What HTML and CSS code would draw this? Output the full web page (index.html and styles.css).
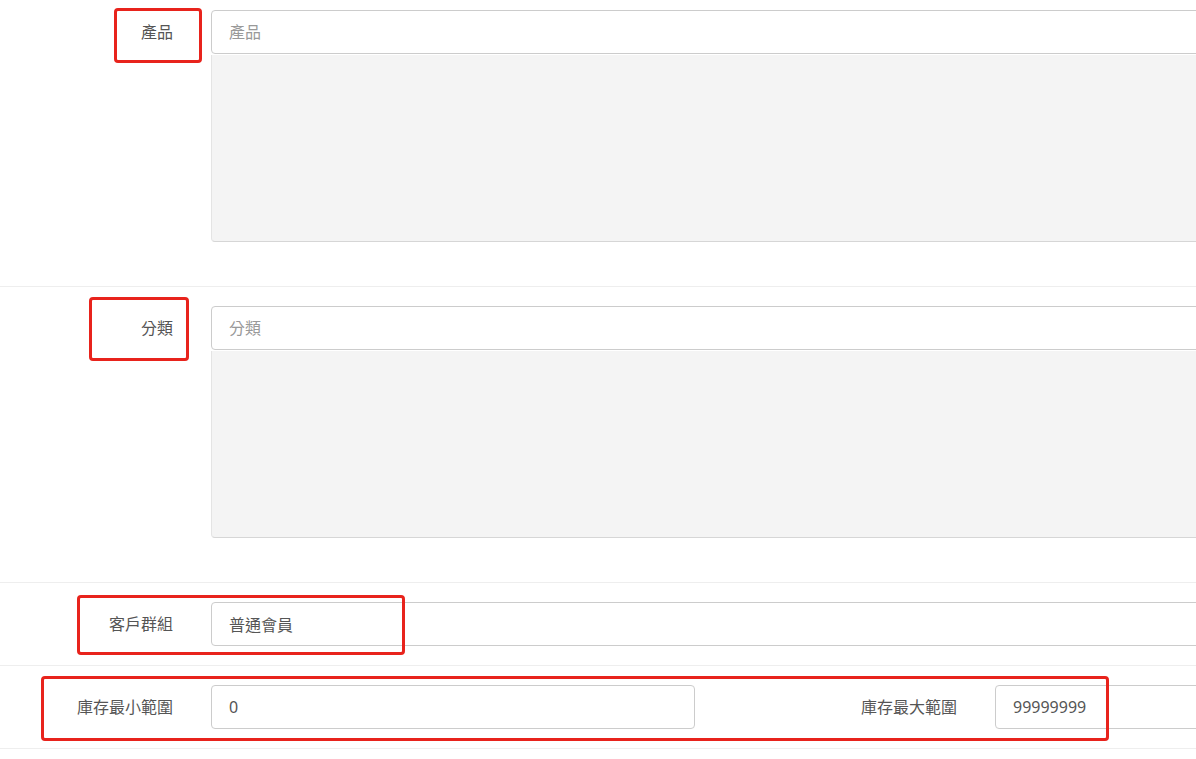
FILE: index.html
```html
<!DOCTYPE html>
<html>
<head>
  <title>商品篩選</title>
  <link rel="stylesheet" href="styles.css">
</head>
<body>

<div class="page">
  <form class="filter-form">
    <div class="form-row first">
      <label class="row-label" for="product">產品</label>
      <div class="row-field">
        <input type="text" id="product" class="text-input" placeholder="產品">
        <div class="pick-list"></div>
      </div>
    </div>

    <div class="form-row">
      <label class="row-label" for="category">分類</label>
      <div class="row-field">
        <input type="text" id="category" class="text-input" placeholder="分類">
        <div class="pick-list"></div>
      </div>
    </div>

    <div class="form-row short">
      <label class="row-label" for="group">客戶群組</label>
      <div class="row-field">
        <input type="text" id="group" class="text-input" value="普通會員">
      </div>
    </div>

    <div class="form-row short split">
      <label class="row-label" for="stockMin">庫存最小範圍</label>
      <input type="text" id="stockMin" class="text-input" value="0">
      <label class="row-label" for="stockMax">庫存最大範圍</label>
      <input type="text" id="stockMax" class="text-input" value="99999999">
    </div>
  </form>

  <!-- highlight marks -->
  <div class="mark mark-product"></div>
  <div class="mark mark-category"></div>
  <div class="mark mark-group"></div>
  <div class="mark mark-stock"></div>
</div>

</body>
</html>
```

FILE: styles.css
```css
html, body {
  margin: 0;
  padding: 0;
  background: #fff;
  overflow: hidden;
}
body {
  font-family: "Noto Sans", "Noto Sans CJK TC", sans-serif;
  font-size: 16px;
  color: #555;
}
.page {
  position: relative;
  width: 1480px;
}
.form-row {
  display: grid;
  grid-template-columns: 211px 1fr;
  padding: 19px 0 44px;
  border-bottom: 1px solid #eee;
}
.form-row.first {
  padding-top: 10px;
}
.form-row.short {
  padding-bottom: 19px;
}
.form-row.split {
  grid-template-columns: 211px 484px 300px 1fr;
}
.row-label {
  height: 44px;
  line-height: 44px;
  text-align: right;
  padding-right: 38px;
  white-space: nowrap;
}
.text-input {
  display: block;
  box-sizing: border-box;
  width: 100%;
  height: 44px;
  margin: 0;
  padding: 0 17px;
  border: 1px solid #ccc;
  border-radius: 4px;
  font-family: inherit;
  font-size: 16px;
  color: #555;
  background: #fff;
  outline: none;
}
.text-input::placeholder {
  color: #999;
}
.pick-list {
  height: 186px;
  margin-top: 1px;
  background-color: #f4f4f4;
  border: 1px solid #e4e4e4;
  border-top: none;
  border-bottom-color: #d6d6d6;
  border-radius: 0 0 4px 4px;
}
.mark {
  position: absolute;
  box-sizing: border-box;
  border: 3px solid #e8231c;
  border-radius: 4px;
}
.mark-product {
  left: 114px;
  top: 8px;
  width: 88px;
  height: 55px;
}
.mark-category {
  left: 89px;
  top: 297px;
  width: 100px;
  height: 64px;
}
.mark-group {
  left: 77px;
  top: 595px;
  width: 328px;
  height: 60px;
}
.mark-stock {
  left: 41px;
  top: 676px;
  width: 1068px;
  height: 65px;
}
```
